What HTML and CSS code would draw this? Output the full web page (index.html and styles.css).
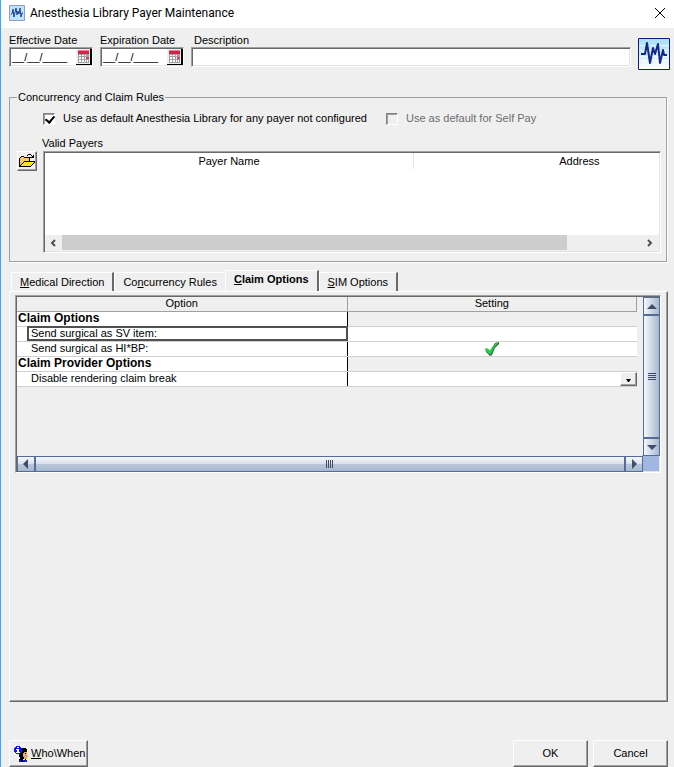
FILE: index.html
```html
<!DOCTYPE html>
<html lang="en">
  <head>
    <meta charset="UTF-8" />
    <meta name="viewport" content="width=device-width, initial-scale=1.0" />
    <title>Anesthesia Library Payer Maintenance</title>
    <link rel="stylesheet" href="styles.css">
  </head>
  <body>
    <!-- shared icons -->
    <svg class="defs" width="0" height="0" aria-hidden="true">
      <linearGradient id="sky" x1="0" y1="0" x2="0" y2="1">
        <stop offset="0" stop-color="#a6def5" />
        <stop offset="1" stop-color="#ffffff" />
      </linearGradient>
      <symbol id="calendar" viewBox="0 0 16 16">
        <path fill="#efefef" d="M0 0h16v16H0z" />
        <path fill="#d8204c" d="M2 1h11v4H2z" />
        <path fill="#f08098" d="M2 1h11v1H2z" />
        <path fill="#a0a0a0" d="M2 5h11v9H2z" />
        <path fill="#fff" d="M3 6h2v1H3zM6 6h2v1H6zM9 6h1v1H9zM3 8h2v2H3zM6 8h2v2H6zM9 8h1v2H9zM3 11h2v2H3zM6 11h2v2H6zM9 11h1v2H9zM11 11h1v2h-1z" />
        <path fill="#e04060" d="M10 8h3v2h-3z" />
        <path fill="#000" d="M14 0h2v16H0v-1h14z" />
      </symbol>
      <symbol id="check" viewBox="0 0 14 14">
        <path fill="#505850" d="M1 8l2-1 2 2 5-8 4-1v2l-4 4-3 7-2 1-4-4z" />
        <path fill="#10d83c" d="M0 7l2-1 3 3 5-7 3-2v1L9 6l-3 6H4L0 8z" />
      </symbol>
    </svg>

    <div class="window flex column">
      <header class="title flex">
        <svg class="appicon" viewBox="0 0 16 16">
          <path fill="#bfe4f7" stroke="#8c9ccc" d="M.5.5h15v15H.5z" />
          <path fill="none" stroke="#2040a0" d="M2 9h1l1-5 1 8 2-9 1 7 1-4 1 3 1-6 1 9 1-4h1" />
        </svg>
        <h1>Anesthesia Library Payer Maintenance</h1>
        <button class="close" aria-label="Close">
          <svg viewBox="0 0 12 12"><path fill="none" stroke="#000" d="M1 1l10 10M11 1L1 11" /></svg>
        </button>
      </header>

      <div class="fields flex">
        <div class="field date">
          <label for="effective">Effective Date</label>
          <div class="datebox flex sunken">
            <input type="text" id="effective" value="__/__/____" />
            <button aria-label="Pick effective date"><svg><use href="#calendar" /></svg></button>
          </div>
        </div>
        <div class="field date">
          <label for="expiration">Expiration Date</label>
          <div class="datebox flex sunken">
            <input type="text" id="expiration" value="__/__/____" />
            <button aria-label="Pick expiration date"><svg><use href="#calendar" /></svg></button>
          </div>
        </div>
        <div class="field description">
          <label for="description">Description</label>
          <input type="text" id="description" class="sunken" />
        </div>
        <button class="wave" aria-label="Anesthesia">
          <svg viewBox="0 0 32 32">
            <path fill="url(#sky)" stroke="#101c80" d="M.5.5h31v31H.5z" />
            <path stroke="#fff" stroke-opacity=".6" d="M1 7.500h30M1 12.500h30M1 18.500h30M1 22.500h30" />
            <path fill="none" stroke="#14288c" stroke-width="2" stroke-linejoin="round" d="M3 16h4l2-11 3 20 3-15 2 6 3-10 2 19 3-13 1 5h3" />
          </svg>
        </button>
      </div>

      <fieldset class="rules">
        <legend>Concurrency and Claim Rules</legend>
        <div class="checks flex">
          <label class="first flex"><input type="checkbox" class="tick" checked />Use as default Anesthesia Library for any payer not configured</label>
          <label class="flex disabled"><input type="checkbox" class="tick" disabled />Use as default for Self Pay</label>
        </div>
        <div class="valid">Valid Payers</div>
        <div class="payers flex">
          <button class="open raised" aria-label="Open payers">
            <svg viewBox="0 0 16 14" shape-rendering="crispEdges">
              <path fill="#000" d="M9 0h3v1H9zM8 1h1v1H8zM12 1h1v1h1V1h1v3h-4V3h2V2h-1z" />
              <path fill="#000" d="M1 3h1V2h3v1h6v4h5v1l-4 5H0V4h1z" />
              <path fill="#ffc860" d="M2 3h3v1h5v3H5l-4 5V4h1z" />
              <path fill="#ffe818" d="M5 8h10l-4 4H2z" />
            </svg>
          </button>
          <div class="list flex column sunken">
            <table>
              <thead>
                <tr><th class="name">Payer Name</th><th>Address</th></tr>
              </thead>
            </table>
            <div class="scroll flex">
              <button aria-label="Scroll left"><svg viewBox="0 0 6 8"><path fill="none" stroke="#505050" stroke-width="2" d="M5 1L2 4l3 3" /></svg></button>
              <div class="track"><div class="thumb"></div></div>
              <button aria-label="Scroll right"><svg viewBox="0 0 6 8"><path fill="none" stroke="#505050" stroke-width="2" d="M1 1l3 3-3 3" /></svg></button>
            </div>
          </div>
        </div>
      </fieldset>

      <nav class="tabs flex">
        <button class="tab"><u>M</u>edical Direction</button>
        <button class="tab wide">Co<u>n</u>currency Rules</button>
        <button class="tab active"><u>C</u>laim Options</button>
        <button class="tab"><u>S</u>IM Options</button>
      </nav>

      <main class="panel">
        <div class="grid sunken">
          <div class="sheet">
            <table>
              <thead>
                <tr><th class="option">Option</th><th>Setting</th></tr>
              </thead>
              <tbody>
                <tr class="group"><td>Claim Options</td><td></td></tr>
                <tr>
                  <td class="item"><div class="focus">Send surgical as SV item:</div></td>
                  <td><label class="mark"><input type="checkbox" aria-label="Send surgical as SV item" /><svg><use href="#check" /></svg></label></td>
                </tr>
                <tr>
                  <td class="item"><div>Send surgical as HI*BP:</div></td>
                  <td><label class="mark"><input type="checkbox" aria-label="Send surgical as HI*BP" checked /><svg><use href="#check" /></svg></label></td>
                </tr>
                <tr class="group"><td>Claim Provider Options</td><td></td></tr>
                <tr>
                  <td class="item"><div>Disable rendering claim break</div></td>
                  <td>
                    <div class="drop flex">
                      <select aria-label="Disable rendering claim break"><option></option></select>
                      <span class="arrow raised"><svg viewBox="0 0 5 3"><path d="M0 0h5L3 3H2z" /></svg></span>
                    </div>
                  </td>
                </tr>
              </tbody>
            </table>
          </div>
          <div class="vbar flex column">
            <button aria-label="Scroll up"><svg viewBox="0 0 10 10"><path fill="#404c68" d="M0 8l5-5 5 5z" /></svg></button>
            <div class="grip flex"><svg viewBox="0 0 8 8"><path stroke="#404c68" d="M0 .5h8M0 2.500h8M0 4.500h8M0 6.500h8" /></svg></div>
            <button aria-label="Scroll down"><svg viewBox="0 0 10 10"><path fill="#404c68" d="M0 3l5 5 5-5z" /></svg></button>
          </div>
          <div class="hbar flex">
            <button aria-label="Scroll left"><svg viewBox="0 0 10 10"><path fill="#404c68" d="M7 0L2 5l5 5z" /></svg></button>
            <div class="grip flex"><svg viewBox="0 0 8 8"><path stroke="#404c68" d="M.5 0v8M2.500 0v8M4.500 0v8M6.500 0v8" /></svg></div>
            <button aria-label="Scroll right"><svg viewBox="0 0 10 10"><path fill="#404c68" d="M3 0l5 5-5 5z" /></svg></button>
          </div>
        </div>
      </main>

      <footer class="foot flex">
        <button class="who raised flex">
          <svg viewBox="0 0 14 16" shape-rendering="crispEdges">
            <path fill="#000" d="M6 3h1V2h5v1h1v3h-2v1H9v4h1v2H9v3H5v-3h1v-2H5V8h1z" />
            <path fill="#e8a868" d="M10 6h3v3h1v2h-1v2h-3v-2H9V7h1z" />
            <path fill="#000" d="M11 7h1v1h-1zM11 13h1v1h-1z" />
            <path fill="#1018e0" d="M2 0h4v1h1v1h1v4H7v1H6v1H2V7H1V6H0V2h1V1h1zM5 14h2v2H5zM9 14h4v2H9z" />
            <path fill="#fff" d="M3 1h2v1H3zM3 3h2v3h1v1H2V6h1V4H2V3z" />
          </svg>
          <span><u>W</u>ho\When</span>
        </button>
        <button class="raised">OK</button>
        <button class="raised">Cancel</button>
      </footer>
    </div>
  </body>
</html>
```
FILE: styles.css
```css
* {
  margin: 0;
  padding: 0;
  box-sizing: border-box;
}
body {
  font: 11px/13px "Liberation Sans", Arial, sans-serif;
  color: #000;
  background-color: #efefef;
}
button,
input,
select {
  font: inherit;
  color: inherit;
  border: none;
  border-radius: 0;
  background: none;
}
svg {
  display: block;
}
.defs {
  position: absolute;
}
.flex {
  display: flex;
}
.column {
  flex-direction: column;
}
.sunken {
  border: 1px solid;
  border-color: #a0a0a0 #fff #fff #a0a0a0;
  box-shadow: inset 1px 1px #696969, inset -1px -1px #e3e3e3;
}
.raised {
  border: 1px solid;
  border-color: #fff #696969 #696969 #fff;
  box-shadow: inset -1px -1px #a0a0a0;
  background-color: #efefef;
}

.window {
  min-height: 100vh;
  border-left: 1px solid #40a8f0;
}

/* title bar */
.title {
  height: 28px;
  padding: 0 8px 3px;
  background-color: #fff;
  align-items: center;
}
.title .appicon {
  width: 16px;
  height: 16px;
  margin-right: 5px;
}
.title h1 {
  font: 12px/16px Roboto, "Open Sans", sans-serif;
  flex: 1;
}
.title .close svg {
  width: 12px;
  height: 12px;
}

/* date and description fields */
.fields {
  padding: 6px 4px 0 8px;
  gap: 7px;
  align-items: flex-start;
}
.field label {
  display: block;
}
.field.date {
  width: 84px;
}
.datebox {
  height: 20px;
  background-color: #fff;
  align-items: center;
}
.datebox input {
  flex: 1;
  min-width: 0;
  padding-left: 2px;
}
.datebox svg {
  width: 16px;
  height: 16px;
}
.field.description {
  flex: 1;
}
.field.description label {
  padding-left: 3px;
}
.field.description input {
  display: block;
  width: 100%;
  height: 20px;
  padding: 2px;
  background-color: #fff;
}
.fields .date label {
  white-space: nowrap;
}
.wave {
  width: 32px;
  height: 32px;
  margin-top: 4px;
}

/* concurrency and claim rules */
.rules {
  margin: 21px 7px 0 8px;
  padding: 8px 5px 8px 7px;
  border: 1px solid #a0a0a0;
  box-shadow: 1px 1px #fff;
}
.rules legend {
  padding: 0 1px;
}
.checks {
  padding-left: 26px;
}
.checks label {
  align-items: center;
}
.checks .first {
  width: 343px;
}
.disabled {
  color: #6d6d6d;
}
.tick {
  appearance: none;
  width: 12px;
  height: 12px;
  margin-right: 8px;
  border: 1px solid;
  border-color: #808080 #fff #fff #808080;
  box-shadow: inset 1px 1px #a0a0a0;
}
.tick:checked {
  background: #fff;
}
.tick:checked::before {
  content: "";
  display: block;
  width: 4px;
  height: 7px;
  margin: 0 0 0 3px;
  border: solid #000;
  border-width: 0 2px 2px 0;
  transform: rotate(40deg);
}
.valid {
  padding: 12px 0 1px 25px;
}
.payers {
  gap: 6px;
  align-items: flex-start;
}
.open {
  width: 20px;
  height: 20px;
  padding: 1px;
}
.open svg {
  width: 16px;
  height: 14px;
}
.list {
  flex: 1;
  height: 102px;
  padding: 1px;
  background-color: #fff;
}
.list table {
  width: 100%;
  border-collapse: collapse;
  table-layout: fixed;
}
.list th {
  height: 16px;
  font-weight: normal;
}
.list .name {
  width: 60%;
  border-right: 1px solid #e3e3e3;
}
.list th:last-child {
  padding-left: 86px;
}
.scroll {
  height: 16px;
  margin-top: auto;
  background-color: #efefef;
}
.scroll button {
  width: 17px;
  padding: 0 5px;
}
.scroll svg {
  width: 6px;
  height: 8px;
}
.track {
  flex: 1;
}
.thumb {
  width: 87%;
  height: 15px;
  background-color: #cdcdcd;
}

/* tabs */
.tabs {
  margin-top: 8px;
  padding-left: 10px;
  align-items: flex-end;
}
.tab {
  height: 19px;
  padding: 0 8px;
  border: 1px solid #fff;
  border-right: 2px solid #696969;
  border-bottom: none;
}
.tab.wide {
  border-right: none;
}
.tab.active {
  height: 21px;
  padding-bottom: 3px;
  font-weight: bold;
}

.panel {
  flex: 1;
  margin: 0 6px 0 8px;
  padding: 3px 6px 3px 5px;
  border: 1px solid;
  border-color: #fff #696969 #696969 #fff;
  box-shadow: inset -1px -1px #a0a0a0;
}
.grid {
  display: grid;
  grid-template-columns: 1fr 17px;
  grid-template-rows: 159px 16px;
  padding: 1px 0 0 1px;
  background: linear-gradient(#a0b8e0, #a0b8e0) right bottom / 18px 17px no-repeat;
}
.sheet {
  padding-right: 6px;
}
.sheet table {
  width: 100%;
  border-collapse: collapse;
  table-layout: fixed;
}
.sheet th {
  height: 14px;
  font-weight: normal;
  border: solid #a0a0a0;
  border-width: 0 1px 1px 0;
}
.sheet .option {
  width: 330px;
}
.sheet td {
  height: 15px;
  background-color: #fff;
  border-bottom: 1px solid #d0d0d0;
}
.sheet td:first-child {
  border-right: 1px solid #000;
}
.sheet .group td {
  padding-left: 1px;
  font-size: 12px;
  font-weight: bold;
}
.sheet .group td:last-child {
  background-color: #efefef;
}
.sheet .item {
  padding-left: 11px;
}
.item div {
  padding-left: 3px;
}
.item .focus {
  outline: 2px solid #505050;
  outline-offset: -1px;
}
.mark {
  display: grid;
  justify-items: center;
}
.mark input,
.mark svg {
  grid-area: 1 / 1;
  width: 14px;
  height: 14px;
  appearance: none;
}
.mark svg {
  visibility: hidden;
}
.mark input:checked + svg {
  visibility: visible;
}
.drop {
  height: 14px;
}
.drop select {
  appearance: none;
  flex: 1;
}
.drop .arrow {
  width: 17px;
  padding: 6px 5px;
}
.arrow svg {
  width: 5px;
  height: 3px;
}

/* grid scroll bars */
.vbar,
.hbar {
  border: 1px solid #566c98;
}
.vbar {
  background: linear-gradient(to right, #f4f8fc, #a8b8d0);
}
.hbar {
  background: linear-gradient(#f4f8fc, #d8e0e8 50%, #b8c8d8 50%, #a8b8d0);
}
.vbar button {
  height: 16px;
  padding: 0 3px;
}
.hbar button {
  width: 16px;
  padding: 0 3px;
}
.vbar button svg,
.hbar button svg {
  width: 10px;
  height: 10px;
}
.grip {
  flex: 1;
  align-items: center;
  justify-content: center;
}
.vbar .grip {
  border: solid #566c98;
  border-width: 2px 0;
}
.hbar .grip {
  border: solid #566c98;
  border-width: 0 2px;
}
.grip svg {
  width: 8px;
  height: 8px;
}

/* bottom buttons */
.foot {
  padding: 38px 6px 0 8px;
  gap: 5px;
}
.foot button {
  width: 75px;
  height: 27px;
}
.foot .who {
  width: 79px;
  margin-right: auto;
  padding-left: 4px;
  gap: 3px;
  align-items: center;
}
.who svg {
  width: 14px;
  height: 16px;
}
```
